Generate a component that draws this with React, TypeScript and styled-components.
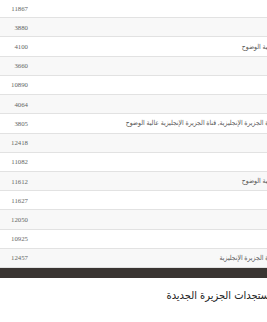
import React from 'react';
import styled, { createGlobalStyle } from 'styled-components';

const GlobalStyle = createGlobalStyle`
  html, body {
    margin: 0;
    padding: 0;
    background: #fff;
    overflow: hidden;
  }
`;

const channels = [
  { id: 11867, name: '' },
  { id: 3880, name: '' },
  { id: 4100, name: 'عالية الوضوح' },
  { id: 3660, name: '' },
  { id: 10890, name: '' },
  { id: 4064, name: '' },
  { id: 3805, name: 'قناة الجزيرة الإنجليزية, قناة الجزيرة الإنجليزية عالية الوضوح' },
  { id: 12418, name: '' },
  { id: 11082, name: '' },
  { id: 11612, name: 'عالية الوضوح' },
  { id: 11627, name: '' },
  { id: 12050, name: '' },
  { id: 10925, name: '' },
  { id: 12457, name: 'قناة الجزيرة الإنجليزية' },
];

export default function App() {
  return (
    <>
      <GlobalStyle />
      <Page>
        <Sheet>
          <FreqTable>
            {channels.map((c, i) => (
              <Row key={c.id} $striped={i % 2 === 1}>
                <NameCell>{c.name}</NameCell>
                <FreqCell>{c.id}</FreqCell>
              </Row>
            ))}
          </FreqTable>
          <FooterBar />
          <SectionTitle>مستجدات الجزيرة الجديدة</SectionTitle>
        </Sheet>
      </Page>
    </>
  );
}

const Page = styled.div`
  width: 267px;
  height: 322px;
  overflow: hidden;
  direction: ltr;
`;

const Sheet = styled.div`
  width: 283px;
  direction: rtl;
  margin-top: -1px;
`;

const FreqTable = styled.div`
  display: flex;
  flex-direction: column;
`;

const Row = styled.div<{ $striped: boolean }>`
  display: flex;
  align-items: center;
  box-sizing: border-box;
  height: 19.23px;
  border-bottom: 1px solid #e2e2e2;
  background: ${(p) => (p.$striped ? '#f8f8f8' : '#fff')};
  color: #666;
  font-family: 'Liberation Serif', 'DejaVu Sans Condensed', 'DejaVu Sans', serif;
  font-size: 6.8px;
`;

const NameCell = styled.div`
  flex: 1;
  padding-right: 8px;
  white-space: nowrap;
  overflow: hidden;
  color: #555;
`;

const FreqCell = styled.div`
  width: 36px;
  box-sizing: border-box;
  padding-right: 8px;
  text-align: right;
`;

const FooterBar = styled.div`
  height: 10px;
  background: #3a3532;
`;

const SectionTitle = styled.h2`
  margin: 10px 8px 0 0;
  font-family: 'DejaVu Sans Condensed', 'DejaVu Sans', sans-serif;
  font-weight: normal;
  font-size: 11px;
  line-height: 16px;
  color: #222;
  white-space: nowrap;
`;
